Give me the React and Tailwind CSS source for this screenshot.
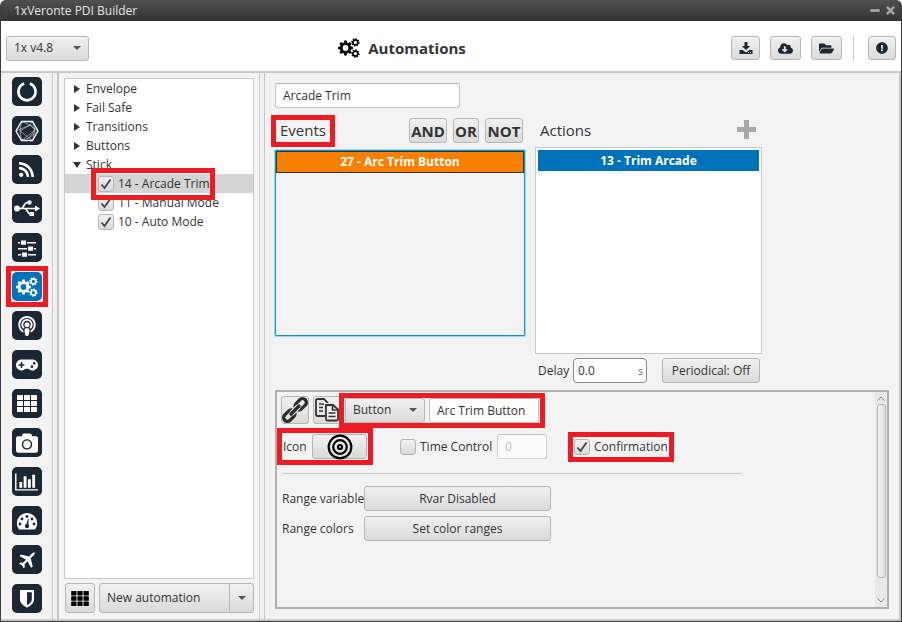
import React, { useState } from 'react';
import {
  FaRss,
  FaPodcast,
  FaGamepad,
  FaCamera,
  FaCloudDownloadAlt,
  FaFolderOpen,
  FaExclamationCircle,
} from 'react-icons/fa';

const raised = 'rounded-[3px] border border-[#b6b6b6] bg-gradient-to-b from-[#f1f1f1] to-[#dadada]';
const field = 'h-[25px] rounded-[3px] border border-[#c4c4c4] border-t-[#b0b0b0] bg-white px-[7px] outline-none';

// Outline of an eight-toothed cog with a round hole in the middle
const cogPath = (cx, cy, outer, inner, hole, turn = 0) => {
  const points = [];
  for (let i = 0; i < 8; i++) {
    const mid = (i / 8) * Math.PI * 2 + turn;
    [[-0.26, inner], [-0.17, outer], [0.17, outer], [0.26, inner]].forEach(([offset, r]) => {
      points.push(`${(cx + r * Math.cos(mid + offset)).toFixed(2)} ${(cy + r * Math.sin(mid + offset)).toFixed(2)}`);
    });
  }
  return `M${points.join('L')}ZM${cx - hole} ${cy}a${hole} ${hole} 0 1 0 ${hole * 2} 0a${hole} ${hole} 0 1 0 ${-hole * 2} 0Z`;
};

const CogsIcon = () => (
  <svg viewBox="0 0 22 20" className="h-5 w-[22px]" fill="currentColor" fillRule="evenodd">
    <path d={cogPath(7.5, 10, 7.5, 5.7, 2.9)} />
    <path d={cogPath(17.4, 4.4, 4.3, 3.2, 1.6, 0.2)} />
    <path d={cogPath(17.4, 15.6, 4.3, 3.2, 1.6, 0.2)} />
  </svg>
);

const PowerRingIcon = () => (
  <svg viewBox="0 0 30 30" className="h-[30px] w-[30px]" fill="none" stroke="white">
    <path d="M12.2 6.6a8.6 8.6 0 1 0 5.6 0" strokeWidth="2.6" />
  </svg>
);

const HexagonIcon = () => (
  <svg viewBox="0 0 30 30" className="h-[30px] w-[30px]" fill="none" stroke="white">
    <path d="M9.500 5.500h11L26 15l-5.500 9.500h-11L4 15z" strokeWidth="1.3" />
    <path
      d="M9.500 5.500 8 15l1.500 9.500M20.500 5.500 23 14l-2.500 10.500M9.500 5.500 18 9l8 6M4 15l14-6 2.500-3.500M8 15l10-6 5 5-6 8-9-7M17 22l3.500 2.500M9.500 24.500 23 14M9.500 24.500 17 22l9-7"
      strokeWidth="0.8"
      opacity="0.6"
    />
  </svg>
);

const UsbIcon = () => (
  <svg viewBox="0 0 30 30" className="h-[30px] w-[30px]" fill="white" stroke="none">
    <circle cx="5" cy="14.500" r="3" />
    <path d="M23 11.500v6l5-3z" />
    <circle cx="17.500" cy="8.500" r="2.200" />
    <path d="M17.500 18h4.500v4h-4.500z" />
    <path d="M5 14.500h19M9 14.500c3 0 3-6 6-6h2M12.500 14.500c3 0 2.500 5.500 6 5.500" fill="none" stroke="white" strokeWidth="1.700" />
  </svg>
);

const SlidersIcon = () => (
  <svg viewBox="0 0 30 30" className="h-[30px] w-[30px]" fill="white">
    <path d="M6 9h18v1.500H6zM6 15h18v1.500H6zM6 21h18v1.500H6z" />
    <path d="M8 7h7v5H8zM15 13h7v5h-7zM9 19h7v5H9z" fill="#1b2733" />
    <path d="M9 7.500h5v4.200H9zM16 13.500h5v4.200h-5zM10 19.500h5v4.200h-5z" />
  </svg>
);

const BarChartIcon = () => (
  <svg viewBox="0 0 2048 1792" className="h-5 w-[23px]" fill="white">
    <path d="M640 896v512H384V896h256zm384-512v1024H768V384h256zm1024 1152v128H0V128h128v1408h1920zm-640-896v768h-256V640h256zm384-384v1152h-256V256h256z" />
  </svg>
);

const GaugeIcon = () => (
  <svg viewBox="0 0 30 30" className="h-[30px] w-[30px]">
    <path d="M7 23.500a10.200 10.200 0 1 1 16 0z" fill="white" />
    <g fill="#1b2733">
      <circle cx="8" cy="18" r="1.400" />
      <circle cx="10" cy="13" r="1.400" />
      <circle cx="15" cy="10.500" r="1.400" />
      <circle cx="20" cy="13" r="1.400" />
      <circle cx="22" cy="18" r="1.400" />
      <circle cx="15" cy="20" r="2.200" />
      <path d="M14.200 19.500 15.800 13l1 .2-.8 6.800z" />
    </g>
  </svg>
);

const PlaneIcon = () => (
  <svg viewBox="0 0 30 30" className="h-[30px] w-[30px]" fill="white">
    <path d="M23 6.500c.8.800.2 2.500-.8 3.500l-3 3 2 8.200-1.500 1.300-3.700-6.500-3 3 .4 2.700-1.300 1.300-1.600-3-3-1.600 1.300-1.300 2.700.4 3-3-6.500-3.700 1.300-1.500 8.200 2 3-3c1-1 2.400-1.600 3.200-.8z" transform="translate(-.5 .3)" />
  </svg>
);

const ShieldIcon = () => (
  <svg viewBox="0 0 30 30" className="h-[30px] w-[30px]">
    <path d="M8 6h14v9.500c0 3.500-3 6-7 8.200-4-2.200-7-4.700-7-8.200z" fill="white" />
    <path d="M15 8.200h4.800v7.300c0 2.200-1.800 4-4.800 5.800z" fill="#1b2733" />
  </svg>
);

const GridIcon = ({ className }) => (
  <svg viewBox="0 0 20 17" className={className} fill="currentColor">
    {[0, 7, 14].map((x) => [0, 6, 12].map((y) => <rect key={`${x}-${y}`} x={x} y={y} width="6" height="5" rx="0.500" />))}
  </svg>
);

const DownloadIcon = () => (
  <svg viewBox="0 0 14 14" className="h-[14px] w-[14px]" fill="#1b2733">
    <path d="M5.500 1h3v4h2.700L7 9 2.800 5h2.700z" />
    <path d="M.5 9h3.200L7 11.500 10.300 9h3.200v4H.5z" />
    <path d="M9 11h1v1H9zM11 11h1v1h-1z" fill="#e4e4e4" />
  </svg>
);

const ChainIcon = () => (
  <svg viewBox="0 0 26 26" className="h-[26px] w-[26px]" fill="none" stroke="#2b2b2b" strokeWidth="3.200">
    <rect x="-1.500" y="9.200" width="13" height="7.600" rx="3.800" transform="rotate(-45 13 13)" />
    <rect x="14.500" y="9.200" width="13" height="7.600" rx="3.800" transform="rotate(-45 13 13)" />
    <path d="M9.500 16.500l7-7" stroke="#e8e8e8" strokeWidth="5.500" />
    <path d="M9 17l8-8" strokeLinecap="round" />
  </svg>
);

const DocumentsIcon = () => (
  <svg viewBox="0 0 26 26" className="h-[26px] w-[26px]" fill="none" stroke="#333" strokeWidth="1.800">
    <path d="M11 19H3.500Q2 19 2 17.500v-14Q2 2 3.500 2H10l3.500 3.500V6" />
    <path d="M5 7h5M5 10.500h4M5 14h4" strokeWidth="1.600" />
    <path d="M12 8h7l5 4.500V22q0 1.500-1.500 1.500h-9Q12 23.500 12 22z" fill="#eee" />
    <path d="M18.500 8v5H24M14.500 16h7M14.500 19.500h7" strokeWidth="1.600" />
  </svg>
);

const TargetIcon = () => (
  <svg viewBox="0 0 26 26" className="h-[26px] w-[26px]" fill="none" stroke="black" strokeWidth="2.200">
    <circle cx="13" cy="13" r="11.300" />
    <circle cx="13" cy="13" r="6.800" />
    <circle cx="13" cy="13" r="2" />
  </svg>
);

const sections = [
  { id: 'veronte', icon: <PowerRingIcon /> },
  { id: 'devices', icon: <HexagonIcon /> },
  { id: 'sensors', icon: <FaRss className="h-[17px] w-[17px]" /> },
  { id: 'connections', icon: <UsbIcon /> },
  { id: 'control', icon: <SlidersIcon /> },
  { id: 'automations', icon: <CogsIcon />, marked: true },
  { id: 'communications', icon: <FaPodcast className="h-5 w-5" /> },
  { id: 'stick', icon: <FaGamepad className="h-[22px] w-[22px]" /> },
  { id: 'variables', icon: <GridIcon className="h-[17px] w-5" /> },
  { id: 'payload', icon: <FaCamera className="h-[22px] w-[22px]" /> },
  { id: 'telemetry', icon: <BarChartIcon /> },
  { id: 'hil', icon: <GaugeIcon /> },
  { id: 'mission', icon: <PlaneIcon /> },
  { id: 'safety', icon: <ShieldIcon /> },
];

const folders = ['Envelope', 'Fail Safe', 'Transitions', 'Buttons'];

const stickItems = [
  { id: 14, name: 'Arcade Trim' },
  { id: 11, name: 'Manual Mode' },
  { id: 10, name: 'Auto Mode' },
];

// Red frame laid over a control to call it out
const Marker = ({ className }) => (
  <span className={`pointer-events-none absolute z-10 border-[5px] border-[#ed1c24] ${className}`} />
);

const Arrow = () => (
  <svg viewBox="0 0 8 4" className="pointer-events-none h-1 w-2" fill="#555">
    <path d="M0 0h8L4 4z" />
  </svg>
);

const Dropdown = ({ label, options, className }) => (
  <div className={`relative ${className}`}>
    <select aria-label={label} className={`h-full w-full appearance-none pl-[7px] outline-none ${raised}`}>
      {options.map((o) => <option key={o}>{o}</option>)}
    </select>
    <span className="pointer-events-none absolute inset-y-0 right-2 flex items-center"><Arrow /></span>
  </div>
);

const Checkbox = ({ label, defaultChecked }) => (
  <label className="flex items-center gap-1 whitespace-nowrap">
    <span className="relative h-4 w-4 shrink-0">
      <input type="checkbox" defaultChecked={defaultChecked} className={`peer block h-4 w-4 appearance-none ${raised}`} />
      <svg viewBox="0 0 16 16" className="pointer-events-none absolute inset-0 hidden h-4 w-4 peer-checked:block" fill="none" stroke="#444" strokeWidth="1.800">
        <path d="M3.500 8.500 6.500 12 12.500 3.500" />
      </svg>
    </span>
    {label}
  </label>
);

const TitleBar = () => (
  <div className="flex h-[21px] items-center justify-between rounded-t-md bg-gradient-to-b from-[#505050] to-[#343434] pr-[6px] pl-[13px] text-[#e4e4e4]">
    <span>1xVeronte PDI Builder</span>
    <div className="flex items-center gap-[6px]">
      <button aria-label="Minimize" className="flex h-3 w-[10px] items-center">
        <span className="h-[3px] w-full rounded-sm bg-[#9b9fa3]" />
      </button>
      <button aria-label="Close">
        <svg viewBox="0 0 10 10" className="h-[9px] w-[9px]" stroke="#a4a8ac" strokeWidth="2.800">
          <path d="M1 1l8 8M9 1L1 9" />
        </svg>
      </button>
    </div>
  </div>
);

const Header = () => (
  <header className="flex h-[52px] items-center border-b-2 border-[#c8c8c8] bg-white px-[5px] pt-1">
    <Dropdown label="Version" options={['1x v4.8']} className="h-[25px] w-[83px]" />
    <h1 className="flex flex-1 items-center justify-center gap-2 pr-4 text-[15px] font-bold">
      <span className="text-black"><CogsIcon /></span>
      Automations
    </h1>
    <div className="flex items-center text-[#1b2733]">
      <button aria-label="Save" className={`mr-[10px] flex h-6 w-[29px] items-center justify-center ${raised}`}>
        <DownloadIcon />
      </button>
      <button aria-label="Import from cloud" className={`mr-[10px] flex h-6 w-[31px] items-center justify-center ${raised}`}>
        <FaCloudDownloadAlt className="h-[15px] w-[15px]" />
      </button>
      <button aria-label="Open" className={`mr-[11px] flex h-6 w-[31px] items-center justify-center ${raised}`}>
        <FaFolderOpen className="h-[15px] w-[15px]" />
      </button>
      <span className="mr-[14px] h-[25px] w-px bg-[#c8c8c8]" />
      <button aria-label="Feedback" className={`flex h-6 w-7 items-center justify-center ${raised}`}>
        <FaExclamationCircle className="h-3 w-3" />
      </button>
    </div>
  </header>
);

const Rail = ({ active, onSelect }) => (
  <nav className="flex w-[52px] shrink-0 flex-col items-center gap-[10px] border-r border-[#c8c8c8] pt-1">
    {sections.map((s) => (
      <div key={s.id} className="relative">
        <button
          aria-label={s.id}
          onClick={() => onSelect(s.id)}
          className={`flex h-[29px] w-[30px] items-center justify-center overflow-hidden rounded-[5px] text-white ${active === s.id ? 'bg-[#0072b9]' : 'bg-[#1b2733]'}`}
        >
          {s.icon}
        </button>
        {s.marked && <Marker className="-inset-[6px]" />}
      </div>
    ))}
  </nav>
);

const AutomationTree = ({ selected, onSelect }) => (
  <aside className="flex w-[201px] shrink-0 flex-col border-r border-[#c8c8c8] px-[5px] pt-[5px] pb-[6px]">
    <ul className="flex-1 border border-[#c8c8c8] bg-white">
      {folders.map((f) => (
        <li key={f} className="flex h-[19px] items-center gap-[6px] pl-[9px]">
          <svg viewBox="0 0 6 8" className="h-2 w-[6px]" fill="#333"><path d="M0 0v8l6-4z" /></svg>
          {f}
        </li>
      ))}
      <li>
        <div className="flex h-[19px] items-center gap-[5px] pl-2">
          <svg viewBox="0 0 8 6" className="h-[6px] w-2" fill="#333"><path d="M0 0h8L4 6z" /></svg>
          Stick
        </div>
        <ul>
          {stickItems.map((item) => (
            <li
              key={item.id}
              onClick={() => onSelect(item.id)}
              className={`flex h-[19px] items-center pl-[33px] ${selected === item.id ? 'bg-[#d4d4d4]' : ''}`}
            >
              <div className="relative">
                <Checkbox label={`${item.id} - ${item.name}`} defaultChecked />
                {item.id === 14 && <Marker className="-inset-y-2 -right-[5px] -left-[7px]" />}
              </div>
            </li>
          ))}
        </ul>
      </li>
    </ul>
    <div className="mt-1 flex gap-1 pl-px">
      <button aria-label="Grid" className={`flex h-[30px] w-[30px] items-center justify-center text-black ${raised}`}>
        <GridIcon className="h-[15px] w-[18px]" />
      </button>
      <div className={`flex h-[30px] flex-1 ${raised}`}>
        <button className="flex-1 px-[7px] text-left">New automation</button>
        <button aria-label="More" className="flex w-6 items-center justify-center border-l border-[#b6b6b6]"><Arrow /></button>
      </div>
    </div>
  </aside>
);

const Splitter = () => (
  <div className="w-1 shrink-0 bg-gradient-to-r from-[#f7f7f7] to-[#ececec]" />
);

const EventsColumn = () => (
  <section className="w-[252px]">
    <div className="mb-[5px] flex h-[26px] items-start justify-between pr-[3px] pl-[6px]">
      <h2 className="relative mt-1 text-[15px]">
        Events
        <Marker className="-inset-x-[9px] -top-[7px] -bottom-[9px]" />
      </h2>
      <div className="flex gap-[6px] text-[15px] font-bold">
        <button className={`h-[25px] w-[38px] ${raised}`}>AND</button>
        <button className={`h-[25px] w-[26px] ${raised}`}>OR</button>
        <button className={`h-[25px] w-[38px] ${raised}`}>NOT</button>
      </div>
    </div>
    <ul className="h-[188px] rounded-[2px] border border-[#9bd8f0] p-px shadow-[inset_0_0_0_1px_#0a96cf]">
      <li className="flex h-[22px] items-center justify-center border border-[#333] bg-[#f97f03] font-bold text-white">27 - Arc Trim Button</li>
    </ul>
  </section>
);

const ActionsColumn = () => (
  <section className="w-[227px]">
    <div className="mb-[3px] flex h-[26px] items-start justify-between pr-[6px] pl-[5px]">
      <h2 className="mt-1 text-[15px]">Actions</h2>
      <button aria-label="Add action" className="mt-[2px]">
        <svg viewBox="0 0 19 19" className="h-[19px] w-[19px]" stroke="#a8a8a8" strokeWidth="5"><path d="M9.500 0v19M0 9.500h19" /></svg>
      </button>
    </div>
    <ul className="h-[207px] border border-[#c8c8c8] bg-white p-[2px]">
      <li className="flex h-[21px] items-center justify-center bg-[#0072b9] font-bold text-white">13 - Trim Arcade</li>
    </ul>
    <div className="mt-1 flex items-center pr-[2px] pl-[3px]">
      <label htmlFor="delay">Delay</label>
      <div className="relative ml-auto w-[74px]">
        <input id="delay" defaultValue="0.0" className="h-[25px] w-full rounded-[4px] border border-[#888] bg-white px-1 outline-none" />
        <span className="pointer-events-none absolute inset-y-0 right-1 flex items-center text-[10px] text-[#666]">s</span>
      </div>
      <button className={`ml-[15px] h-[25px] w-[98px] ${raised}`}>Periodical: Off</button>
    </div>
  </section>
);

const Scrollbar = () => (
  <div className="flex w-3 shrink-0 flex-col items-center bg-[#e9e9e9] py-1">
    <svg viewBox="0 0 8 5" className="h-[5px] w-2" fill="none" stroke="#888"><path d="M.5 4.500 4 1l3.500 3.500" /></svg>
    <div className="mt-[3px] mb-5 w-[9px] flex-1 rounded-[3px] border border-[#b4b4b4] bg-gradient-to-r from-[#f4f4f4] to-[#dedede]" />
    <svg viewBox="0 0 8 5" className="h-[5px] w-2" fill="none" stroke="#888"><path d="M.5 .5 4 4 7.500 .5" /></svg>
  </div>
);

const EventDetails = () => (
  <section className="mr-[10px] flex flex-1 border-2 border-[#b0b0b0]">
    <div className="flex-1 pt-1 pl-1">
      <div className="flex items-center">
        <button aria-label="Link" className={`flex h-7 w-7 items-center justify-center ${raised}`}><ChainIcon /></button>
        <button aria-label="Duplicate" className={`ml-1 flex h-7 w-7 items-center justify-center ${raised}`}><DocumentsIcon /></button>
        <div className="relative ml-1 flex gap-1">
          <Dropdown label="Event type" options={['Button']} className="h-[25px] w-[80px]" />
          <input aria-label="Event name" defaultValue="Arc Trim Button" className={`w-[110px] ${field}`} />
          <Marker className="-inset-x-[6px] -inset-y-[5px]" />
        </div>
      </div>
      <div className="mt-[10px] flex h-[25px] items-center pl-[2px]">
        <div className="relative flex w-[84px] items-center justify-between">
          <span id="icon-label">Icon</span>
          <button aria-labelledby="icon-label" className={`flex h-[25px] w-[55px] items-center justify-center ${raised}`}><TargetIcon /></button>
          <Marker className="-inset-x-[6px] -inset-y-[6px]" />
        </div>
        <div className="ml-[33px] w-[97px]">
          <Checkbox label="Time Control" />
        </div>
        <input aria-label="Time" disabled defaultValue="0" className={`w-[50px] text-[#a8a8a8] opacity-70 ${field}`} />
        <div className="relative ml-[27px]">
          <Checkbox label="Confirmation" defaultChecked />
          <Marker className="-inset-x-[6px] -inset-y-[7px]" />
        </div>
      </div>
      <hr className="mt-[14px] mb-[12px] ml-px w-[460px] border-[#c8c8c8]" />
      <div className="grid grid-cols-[82px_187px] items-center gap-y-[5px] pl-px">
        <label htmlFor="range-variable" className="whitespace-nowrap">Range variable</label>
        <button id="range-variable" className={`h-[25px] ${raised}`}>Rvar Disabled</button>
        <label htmlFor="range-colors">Range colors</label>
        <button id="range-colors" className={`h-[25px] ${raised}`}>Set color ranges</button>
      </div>
    </div>
    <Scrollbar />
  </section>
);

const App = () => {
  const [section, setSection] = useState('automations');
  const [selected, setSelected] = useState(14);

  return (
    <div className="flex min-h-screen flex-col rounded-t-md bg-[#3c3c3c] px-px pb-px font-['Open_Sans',sans-serif] text-[12px] leading-4 text-[#333]">
      <TitleBar />
      <Header />
      <div className="flex flex-1 border-b-2 border-[#c8c8c8] bg-[#f3f3f3]">
        <Rail active={section} onSelect={setSection} />
        <Splitter />
        <div className="w-[2px] shrink-0 bg-[#c8c8c8]" />
        <AutomationTree selected={selected} onSelect={setSelected} />
        <Splitter />
        <main className="flex flex-1 flex-col border-r-2 border-l border-[#c8c8c8] py-[10px] pl-[9px]">
          <input aria-label="Automation name" defaultValue="Arcade Trim" className={`ml-px w-[185px] ${field}`} />
          <div className="mt-[10px] mb-[7px] flex gap-[9px]">
            <EventsColumn />
            <ActionsColumn />
          </div>
          <div className="flex flex-1 pl-px">
            <EventDetails />
          </div>
        </main>
      </div>
    </div>
  );
};

export default App;
